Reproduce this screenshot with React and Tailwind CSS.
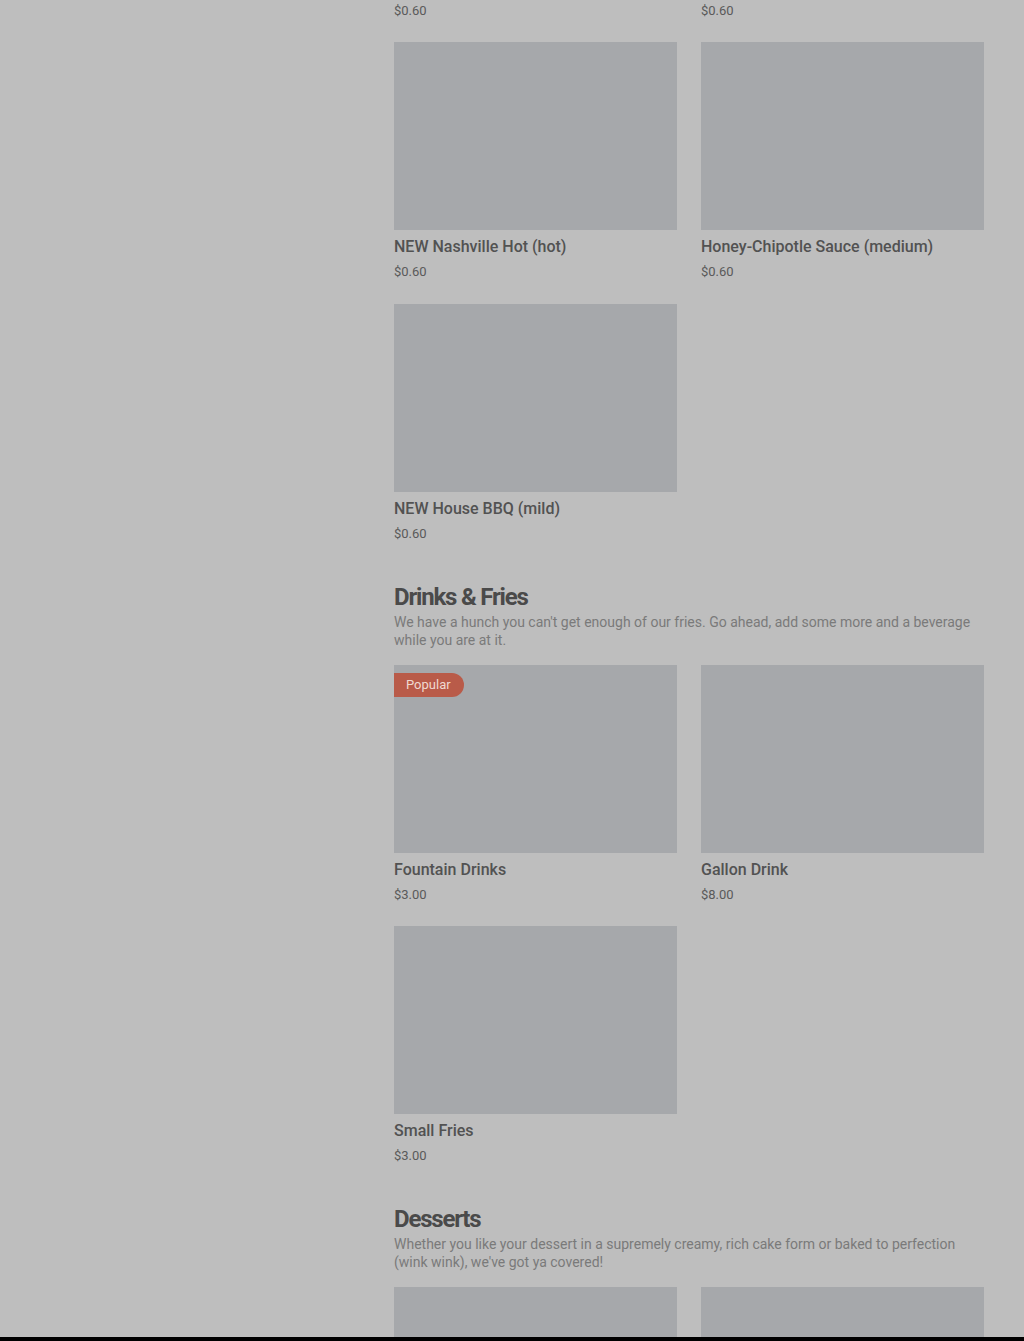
import React from "react";

function Card({ title, price, popular }) {
  return (
    <div className="flex flex-col">
      <div className="relative h-[188px] bg-[#a6a8ab]">
        {popular && (
          <span className="absolute left-0 top-[8px] flex h-[24px] items-center rounded-r-full bg-[#b95b49] pl-[12px] pr-[13px] text-[13px] text-[#f0d9d0]">
            Popular
          </span>
        )}
      </div>
      <div className="mt-[7px] text-[16px] font-medium leading-5 text-[#525252]">{title}</div>
      <div className="mt-[5px] text-[13px] leading-5 text-[#5a5a5a]">{price}</div>
    </div>
  );
}

function Section({ title, desc, children, top }) {
  return (
    <div className={top}>
      <h2 className="text-[24px] font-bold leading-8 tracking-[-0.05em] text-[#4a4a4a]">{title}</h2>
      <p className="text-[14px] leading-[18px] text-[#7a7a7a]">{desc}</p>
      <div className="mt-[16px] grid grid-cols-2 gap-x-[24px] gap-y-[21px]">{children}</div>
    </div>
  );
}

export default function App() {
  return (
    <div className="flex h-[1341px] flex-col overflow-hidden bg-black" style={{ fontFamily: "Roboto, 'Liberation Sans', sans-serif" }}>
      <div className="h-[1337px] shrink-0 overflow-hidden bg-[#bebebe]">
        <div className="ml-[394px] w-[590px] pt-[1px]">
          <div className="grid grid-cols-2 gap-x-[24px]">
            <div className="text-[13px] leading-5 text-[#5a5a5a]">$0.60</div>
            <div className="text-[13px] leading-5 text-[#5a5a5a]">$0.60</div>
          </div>
          <div className="mt-[21px] grid grid-cols-2 gap-x-[24px] gap-y-[22px]">
            <Card title="NEW Nashville Hot (hot)" price="$0.60" />
            <Card title="Honey-Chipotle Sauce (medium)" price="$0.60" />
            <Card title="NEW House BBQ (mild)" price="$0.60" />
          </div>
          <Section
            top="mt-[37px]"
            title="Drinks & Fries"
            desc="We have a hunch you can't get enough of our fries. Go ahead, add some more and a beverage while you are at it."
          >
            <Card title="Fountain Drinks" price="$3.00" popular />
            <Card title="Gallon Drink" price="$8.00" />
            <Card title="Small Fries" price="$3.00" />
          </Section>
          <Section
            top="mt-[37px]"
            title="Desserts"
            desc="Whether you like your dessert in a supremely creamy, rich cake form or baked to perfection (wink wink), we've got ya covered!"
          >
            <Card title="" price="" />
            <Card title="" price="" />
          </Section>
        </div>
      </div>
    </div>
  );
}
